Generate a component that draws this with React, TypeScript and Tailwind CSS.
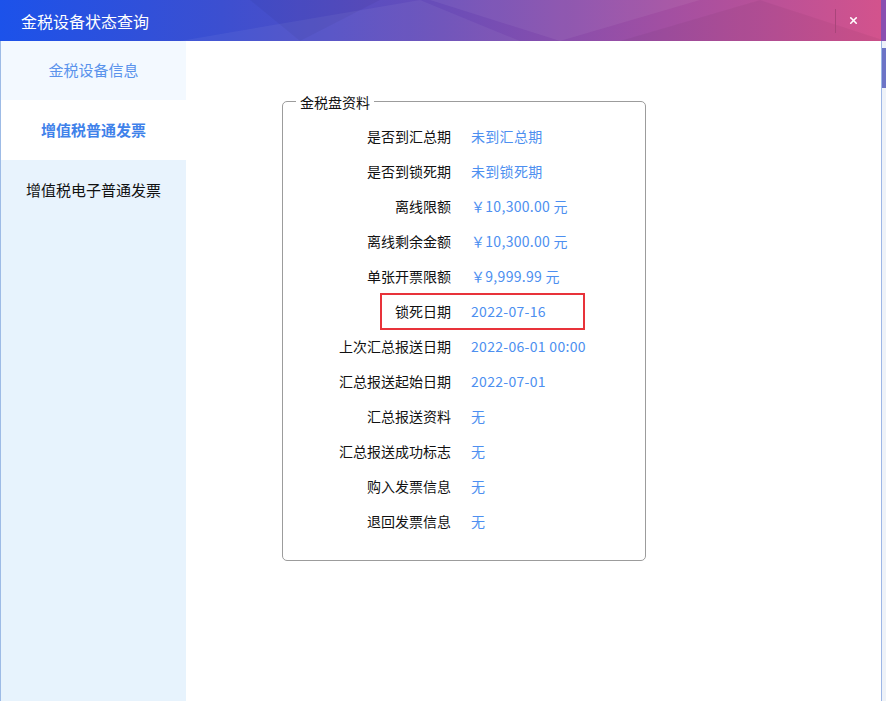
import React from 'react';
import { X } from 'lucide-react';

const rows: { label: string; value: string; marked?: boolean }[] = [
  { label: '是否到汇总期', value: '未到汇总期' },
  { label: '是否到锁死期', value: '未到锁死期' },
  { label: '离线限额', value: '￥10,300.00 元' },
  { label: '离线剩余金额', value: '￥10,300.00 元' },
  { label: '单张开票限额', value: '￥9,999.99 元' },
  { label: '锁死日期', value: '2022-07-16', marked: true },
  { label: '上次汇总报送日期', value: '2022-06-01 00:00' },
  { label: '汇总报送起始日期', value: '2022-07-01' },
  { label: '汇总报送资料', value: '无' },
  { label: '汇总报送成功标志', value: '无' },
  { label: '购入发票信息', value: '无' },
  { label: '退回发票信息', value: '无' },
];

const font = { fontFamily: '"Noto Sans CJK SC", "Noto Sans", sans-serif' };

export default function App() {
  return (
    <div className="w-[886px] h-[701px] flex flex-col bg-white overflow-hidden" style={font}>
      {/* title bar */}
      <div className="relative h-[41px] shrink-0 flex items-center bg-[linear-gradient(90deg,#1c52ea_0%,#3c4fd0_25%,#6a4db8_50%,#a24fa2_75%,#d4538c_100%)]">
        <svg className="absolute inset-0 w-full h-full" viewBox="0 0 886 41" preserveAspectRatio="none">
          <polygon points="180,41 420,0 520,41" fill="#ffffff" opacity="0.05" />
          <polygon points="430,0 700,0 560,41" fill="#ffffff" opacity="0.06" />
          <polygon points="620,41 760,0 886,41" fill="#000000" opacity="0.04" />
          <polygon points="250,0 380,0 300,41" fill="#000000" opacity="0.04" />
        </svg>
        <span className="relative ml-[21px] text-white text-[16px]">金税设备状态查询</span>
        <div className="relative ml-auto mr-[22px] flex items-center">
          <div className="w-px h-[24px] bg-[#a9457a] mr-[12px]" />
          <X className="w-[11px] h-[11px] text-white" strokeWidth={3.5} />
        </div>
        <div className="relative w-[5px] h-full bg-[#8a4fb0]" />
      </div>

      <div className="flex flex-1 min-h-0">
        {/* sidebar */}
        <div className="w-[186px] shrink-0 flex flex-col bg-[#e7f3fd] border-l border-[#9dbbe6]">
          <div className="h-[59px] flex items-center justify-center bg-[#f3f9ff] text-[15px] text-[#5a93ec]">金税设备信息</div>
          <div className="h-[60px] flex items-center justify-center bg-white text-[15px] font-bold text-[#3f82ea]">增值税普通发票</div>
          <div className="h-[60px] flex items-center justify-center bg-[#e8f3fd] text-[15px] text-[#111]">增值税电子普通发票</div>
        </div>

        {/* content */}
        <div className="flex-1 pl-[96px] pt-[60px]">
          <div className="relative w-[364px] h-[460px] rounded-[5px] border border-[#9c9c9c] pt-[17px]">
            <span className="absolute -top-[10px] left-[13px] bg-white px-[4px] text-[14px] leading-[20px] text-[#111]">金税盘资料</span>
            {rows.map((r) => (
              <div key={r.label} className="relative h-[35px] flex items-center text-[14px]">
                <span className="w-[168px] text-right text-[#111]">{r.label}</span>
                <span className="ml-[20px] text-[#4d8ff0] tracking-[0.3px]">{r.value}</span>
                {r.marked && (
                  <div className="absolute left-[97px] top-[-1px] w-[205px] h-[37px] border-2 border-[#e8333a]" />
                )}
              </div>
            ))}
          </div>
        </div>

        {/* scrollbar */}
        <div className="w-[5px] shrink-0 flex flex-col border-l border-[#9cb6e6] bg-[#eef2f8]">
          <div className="h-[7px]" />
          <div className="h-[40px] bg-[#6c74c6]" />
        </div>
      </div>
    </div>
  );
}
